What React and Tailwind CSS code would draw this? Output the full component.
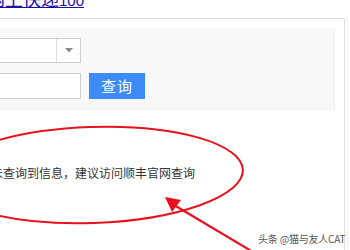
import React from "react";

export default function App() {
  return (
    <div className="relative w-[350px] h-[250px] overflow-hidden bg-white font-['Noto_Sans_CJK_SC','Noto_Sans',sans-serif]">
      {/* top link, mostly scrolled off */}
      <div className="h-[18px] overflow-hidden">
        <a className="block -mt-[11px] -ml-[13px] text-[18px] leading-[18px] text-[#1a0dab] underline underline-offset-[1px] whitespace-nowrap">
          网上快递<span className="font-['Liberation_Sans',sans-serif] text-[15px]">100</span>
        </a>
      </div>

      {/* main box */}
      <div className="w-[345px] h-[232px] border-t border-r border-[#dcdcdc]">
        <div className="mt-[9px] w-[335px] h-[82px] bg-[#f8f8f8] border-r border-b border-[#f1f1f1] pt-[10px]">
          {/* select */}
          <div className="-ml-[10px] flex w-[91px] h-[25px] border border-[#cfcfcf] bg-white">
            <div className="flex-1" />
            <div className="w-[24px] border-l border-[#dedede] flex items-center justify-center">
              <svg width="8" height="5" viewBox="0 0 8 5">
                <polygon points="0,0 8,0 4,4.5" fill="#8a8a8a" />
              </svg>
            </div>
          </div>
          {/* input + button */}
          <div className="mt-[10px] flex items-center">
            <div className="-ml-[10px] w-[91px] h-[26px] border border-[#cfcfcf] bg-white" />
            <button className="ml-[8px] w-[56px] h-[26px] bg-[#3c8bf6] text-white text-[15px] leading-[26px] tracking-[1px]">
              查询
            </button>
          </div>
        </div>

        <p className="mt-[56px] -ml-[9px] text-[12px] leading-[14px] text-[#333] whitespace-nowrap">
          未查询到信息，建议访问顺丰官网查询
        </p>
      </div>

      {/* faint outer edge */}
      <div className="absolute top-[18px] left-[347px] w-px h-[232px] bg-[#f0f0f0]" />

      {/* red annotations */}
      <svg className="absolute left-0 top-0" width="350" height="250" viewBox="0 0 350 250">
        <ellipse cx="92" cy="175" rx="151" ry="48" transform="rotate(-2 92 175)" fill="none" stroke="#e8101a" strokeWidth="2" />
        <line x1="253" y1="252" x2="174" y2="205" stroke="#e8101a" strokeWidth="2.2" />
        <polygon points="165,197 181,200 172,212" fill="#e8101a" />
      </svg>

      {/* watermark */}
      <div className="absolute left-[258px] top-[232px] text-[10px] leading-[14px] tracking-[-0.2px] text-[#555] whitespace-nowrap [text-shadow:0_0_2px_#fff]">
        头条 @猫与友人CAT
      </div>
    </div>
  );
}
